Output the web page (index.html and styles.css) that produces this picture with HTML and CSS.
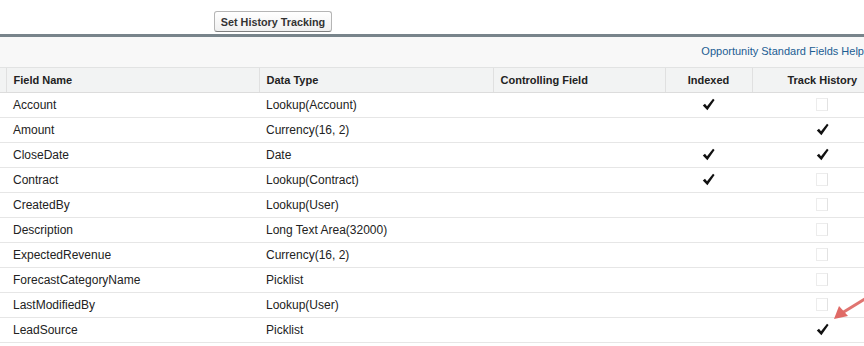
FILE: index.html
```html
<!DOCTYPE html>
<html>
<head>
<meta charset="utf-8">
<link rel="stylesheet" href="styles.css">
</head>
<body>
<div class="page">
  <div class="toolbar">
    <button class="btn">Set History Tracking</button>
  </div>
  <div class="panel">
    <div class="helpbar"><a class="help" href="#">Opportunity Standard Fields Help</a></div>
    <table class="list">
      <colgroup>
        <col class="c-act"><col class="c-name"><col class="c-type"><col class="c-ctrl"><col class="c-idx"><col class="c-hist">
      </colgroup>
      <thead>
        <tr>
          <th class="act"></th>
          <th>Field Name</th>
          <th>Data Type</th>
          <th>Controlling Field</th>
          <th class="center">Indexed</th>
          <th class="center">Track History</th>
        </tr>
      </thead>
      <tbody>
        <tr><td></td><td>Account</td><td>Lookup(Account)</td><td></td><td class="center"><span class="chk on"></span></td><td class="center hist"><span class="chk off"></span></td></tr>
        <tr><td></td><td>Amount</td><td>Currency(16, 2)</td><td></td><td class="center"></td><td class="center hist"><span class="chk on"></span></td></tr>
        <tr><td></td><td>CloseDate</td><td>Date</td><td></td><td class="center"><span class="chk on"></span></td><td class="center hist"><span class="chk on"></span></td></tr>
        <tr><td></td><td>Contract</td><td>Lookup(Contract)</td><td></td><td class="center"><span class="chk on"></span></td><td class="center hist"><span class="chk off"></span></td></tr>
        <tr><td></td><td>CreatedBy</td><td>Lookup(User)</td><td></td><td class="center"></td><td class="center hist"><span class="chk off"></span></td></tr>
        <tr><td></td><td>Description</td><td>Long Text Area(32000)</td><td></td><td class="center"></td><td class="center hist"><span class="chk off"></span></td></tr>
        <tr><td></td><td>ExpectedRevenue</td><td>Currency(16, 2)</td><td></td><td class="center"></td><td class="center hist"><span class="chk off"></span></td></tr>
        <tr><td></td><td>ForecastCategoryName</td><td>Picklist</td><td></td><td class="center"></td><td class="center hist"><span class="chk off"></span></td></tr>
        <tr><td></td><td>LastModifiedBy</td><td>Lookup(User)</td><td></td><td class="center"></td><td class="center hist"><span class="chk off"></span></td></tr>
        <tr><td></td><td>LeadSource</td><td>Picklist</td><td></td><td class="center"></td><td class="center hist"><span class="chk on"></span></td></tr>
      </tbody>
    </table>
  </div>
  <svg class="arrow" width="40" height="36" viewBox="0 0 40 36">
    <line x1="42" y1="9" x2="16" y2="25" stroke="#e07470" stroke-width="3" stroke-linecap="round"/>
    <polygon points="8,31 13,18 22,28" fill="#e06a66"/>
  </svg>
</div>
</body>
</html>
```
FILE: styles.css
```css
html, body {
  margin: 0;
  padding: 0;
  overflow: hidden;
  background: #ffffff;
}
body {
  font-family: "Liberation Sans", Arial, sans-serif;
  color: #222;
}
.page {
  position: relative;
  width: 864px;
  height: 346px;
  overflow: hidden;
}
.toolbar {
  height: 34px;
  display: flex;
  align-items: flex-start;
  padding-left: 214px;
  box-sizing: border-box;
  padding-top: 11px;
}
.btn {
  width: 118px;
  height: 21px;
  padding: 0;
  margin: 0;
  font-family: "Liberation Sans", Arial, sans-serif;
  font-size: 10.8px;
  font-weight: bold;
  color: #333;
  border: 1px solid #b5b5b5;
  border-bottom-color: #7f7f7f;
  border-radius: 3px;
  background: linear-gradient(#ffffff, #f0f0f0);
}
.panel {
  border-top: 3px solid #78848b;
  background: #f8f8f8;
  width: 894px;
}
.helpbar {
  height: 30px;
  width: 864px;
  display: flex;
  align-items: center;
  justify-content: flex-end;
  box-sizing: border-box;
  padding-bottom: 3px;
}
.help {
  font-size: 11px;
  color: #1c5d93;
  text-decoration: none;
  margin-right: 0;
  white-space: nowrap;
}
.list {
  border-collapse: collapse;
  table-layout: fixed;
  width: 894px;
  background: #fff;
}
.c-act { width: 6px; }
.c-name { width: 253px; }
.c-type { width: 234px; }
.c-ctrl { width: 172px; }
.c-idx { width: 87px; }
.c-hist { width: 142px; }
.list th {
  background: #f2f3f3;
  height: 24px;
  padding: 0 0 0 7px;
  font-size: 11px;
  font-weight: bold;
  color: #222;
  text-align: left;
  border-top: 1px solid #e2e3e3;
  border-bottom: 1px solid #dcdcdc;
  border-left: 1px solid #e0e0e0;
  white-space: nowrap;
}
.list th.act {
  border-left: none;
  padding: 0;
}
.list th.center, .list td.center {
  text-align: center;
  padding-left: 0;
}
.list th.center:last-child {
  padding-right: 2px;
}
.list td {
  height: 24px;
  padding: 0 0 0 7px;
  font-size: 12px;
  color: #222;
  border-bottom: 1px solid #e6e6e6;
  white-space: nowrap;
  background: #fff;
}
.list td.hist {
  padding-right: 2px;
}
.chk {
  display: inline-block;
  width: 13px;
  height: 13px;
  vertical-align: middle;
  position: relative;
  top: -1px;
}
.chk.off {
  width: 10px;
  height: 11px;
  border: 1px solid #ececec;
  border-right-color: #e2e2e2;
  background: #fff;
}
.chk.on {
  background-repeat: no-repeat;
  background-image: url("data:image/svg+xml;utf8,<svg xmlns='http://www.w3.org/2000/svg' width='13' height='13' viewBox='0 0 13 13'><path d='M0.8 7.4 L3 5.8 L5 8.2 L11 0.8 L12.6 2 L5.4 12.2 Z' fill='%23111'/></svg>");
}
.arrow {
  position: absolute;
  left: 826px;
  top: 288px;
}
```
